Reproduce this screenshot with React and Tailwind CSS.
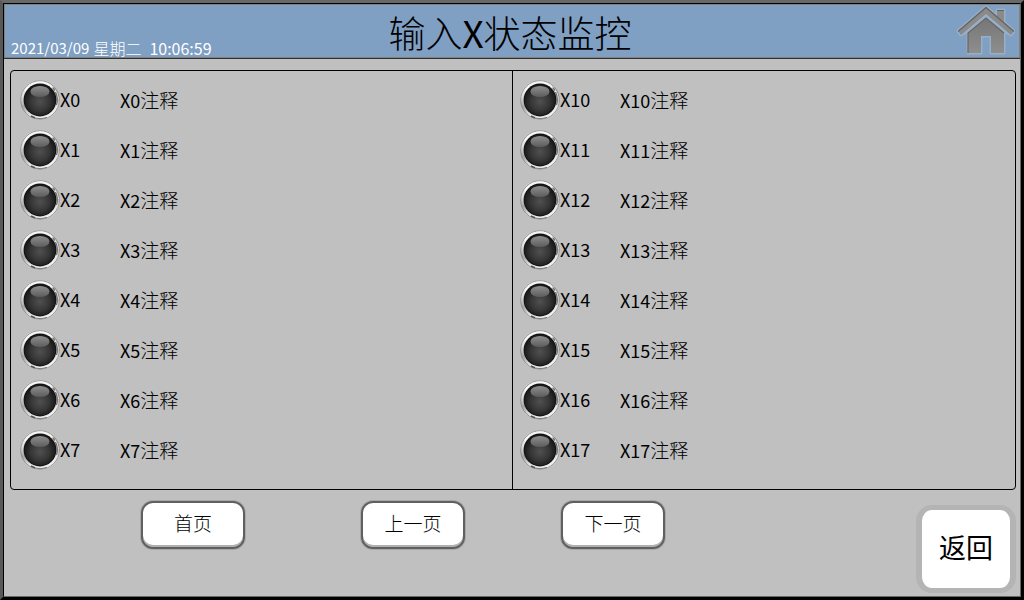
import React from "react";

const leftInputs = ["X0", "X1", "X2", "X3", "X4", "X5", "X6", "X7"];
const rightInputs = ["X10", "X11", "X12", "X13", "X14", "X15", "X16", "X17"];

// gradients shared by every lamp and by the home icon
const Gradients = () => (
    <svg className="absolute h-0 w-0" aria-hidden="true">
        <defs>
            <linearGradient id="rim" x1="0.3" y1="0" x2="0.7" y2="1">
                <stop offset="0" stopColor="#f4f4f2" />
                <stop offset="0.25" stopColor="#e2e2e0" />
                <stop offset="0.5" stopColor="#a6a4a4" />
                <stop offset="0.75" stopColor="#e6e6e6" />
                <stop offset="1" stopColor="#f2f2f2" />
            </linearGradient>
            <radialGradient id="lens" cx="0.5" cy="0.55" r="0.5">
                <stop offset="0" stopColor="#505050" />
                <stop offset="0.6" stopColor="#363636" />
                <stop offset="1" stopColor="#1a1a1a" />
            </radialGradient>
            <linearGradient id="shine" x1="0" y1="0" x2="0" y2="1">
                <stop offset="0" stopColor="#8e8e8e" />
                <stop offset="1" stopColor="#5c5c5c" />
            </linearGradient>
            <linearGradient id="house" x1="0" y1="0" x2="0" y2="1">
                <stop offset="0" stopColor="#767676" />
                <stop offset="1" stopColor="#8e8e8e" />
            </linearGradient>
        </defs>
    </svg>
);

const Lamp = () => (
    <svg className="h-10 w-10 shrink-0" viewBox="0 0 40 40" aria-hidden="true">
        <circle cx="20" cy="20" r="19.7" fill="url(#rim)" />
        <circle cx="20" cy="20" r="19.3" fill="none" stroke="#858383" strokeWidth="0.8" />
        <path d="M5 11A17.6 17.6 0 0 1 32 7.2" fill="none" stroke="#f6f6f4" strokeWidth="1.8" />
        <path d="M34.5 9.5A18 18 0 0 1 38 19" fill="none" stroke="#efefef" strokeWidth="1.4" />
        <path d="M35.5 12A17.5 17.5 0 0 1 36.5 25" fill="none" stroke="#6c6868" strokeWidth="1.2" />
        <path d="M33 8A18 18 0 0 1 35 10.5" fill="none" stroke="#7c7878" strokeWidth="1.6" />
        <path d="M11 36A18.4 18.4 0 0 0 15 37.7" fill="none" stroke="#5c5050" strokeWidth="1.6" />
        <path d="M15 38A18.6 18.6 0 0 0 27 37.4" fill="none" stroke="#777272" strokeWidth="0.9" />
        <circle cx="20" cy="20" r="16.4" fill="#101010" />
        <circle cx="20" cy="20" r="15.6" fill="url(#lens)" />
        <ellipse cx="20" cy="11.5" rx="9.5" ry="5.5" fill="url(#shine)" />
    </svg>
);

const HomeIcon = () => (
    <svg className="h-14 w-15" viewBox="0 0 60 56" aria-hidden="true">
        <path
            d="M3 27 31 3 42 12V6H49V18L59 27 56 31 49 27V49H36V32H26V49H13V27L6 31Z"
            fill="#a9bccb"
            stroke="#a9bccb"
            strokeWidth="3"
            strokeLinejoin="round"
            opacity="0.6"
        />
        <path d="M42 6H49V18L42 12Z" fill="#8a8a8a" />
        <path d="M42 6.5H49" stroke="#636363" />
        <path d="M13 29 31 14 49 29V49H36V32H26V49H13Z" fill="url(#house)" />
        <path d="M13 49V29L31 14 49 29" fill="none" stroke="#666666" strokeWidth="1.2" />
        <path d="M31 3 59 27 56 31 31 10 6 31 3 27Z" fill="#8a8a8a" />
        <path d="M3 27.5 31 3.5 59 27.5" fill="none" stroke="#666666" strokeWidth="1.4" />
    </svg>
);

const InputColumn = ({ items }) => (
    <ul className="flex flex-col gap-2.5 pt-[9px]">
        {items.map((name) => (
            <li key={name} className="flex h-10 items-center text-[18px] leading-5">
                <Lamp />
                <span className="w-15 pb-0.5">{name}</span>
                <span className="pb-px">
                    {name}
                    <span className="text-[19px] font-light">注释</span>
                </span>
            </li>
        ))}
    </ul>
);

const PageButton = ({ children }) => (
    <button
        type="button"
        className="h-12 w-26 rounded-xl border-2 border-[#5e6161] bg-white pb-1 text-[19px] font-light shadow-[0_0_0_1px_#a8a8a8,inset_0_-2px_0_#b0b0b0]"
    >
        {children}
    </button>
);

const App = () => {
    return (
        <div className="flex min-h-screen flex-col border-3 border-t-[#686868] border-l-[#585858] border-r-black border-b-black bg-[#c0c0c0] font-['Noto_Sans_CJK_SC',sans-serif] text-black">
            <Gradients />
            <div className="flex flex-1 flex-col border border-t-black border-l-black border-r-[#686868] border-b-[#686868]">
                <div className="border-b border-[#303030]">
                    <header className="grid h-[54px] grid-cols-[1fr_auto_1fr] border border-[#808080] bg-[#7f9fc3]">
                        <div className="flex items-end gap-1 pb-1 pl-1.5 text-[16px] leading-4 text-white">
                            <span className="text-[15px]">2021/03/09</span>
                            <span className="font-light">星期二</span>
                            <time className="pl-1">10:06:59</time>
                        </div>
                        <h1 className="pr-1 text-[37px] leading-[54px] font-light">
                            输入<span className="font-normal">X</span>状态监控
                        </h1>
                        <button
                            type="button"
                            aria-label="主页"
                            className="-mt-px h-14 justify-self-end pr-1"
                        >
                            <HomeIcon />
                        </button>
                    </header>
                </div>

                <main className="mt-[11px] mr-1 ml-1.5 grid h-105 grid-cols-2 rounded border border-black">
                    <div className="border-r border-black pl-[9px]">
                        <InputColumn items={leftInputs} />
                    </div>
                    <div className="pl-[7px]">
                        <InputColumn items={rightInputs} />
                    </div>
                </main>

                <footer className="flex flex-1 items-start justify-between pr-1">
                    <nav className="flex pt-[11px] pl-[137px]">
                        <PageButton>首页</PageButton>
                        <div className="flex gap-24 pl-29">
                            <PageButton>上一页</PageButton>
                            <PageButton>下一页</PageButton>
                        </div>
                    </nav>
                    <button
                        type="button"
                        className="mt-[15px] h-22 w-25 rounded-2xl border-x-6 border-y-5 border-[#b4b4b4] bg-white pb-1 text-[27px]"
                    >
                        返回
                    </button>
                </footer>
            </div>
        </div>
    );
};

export default App;
